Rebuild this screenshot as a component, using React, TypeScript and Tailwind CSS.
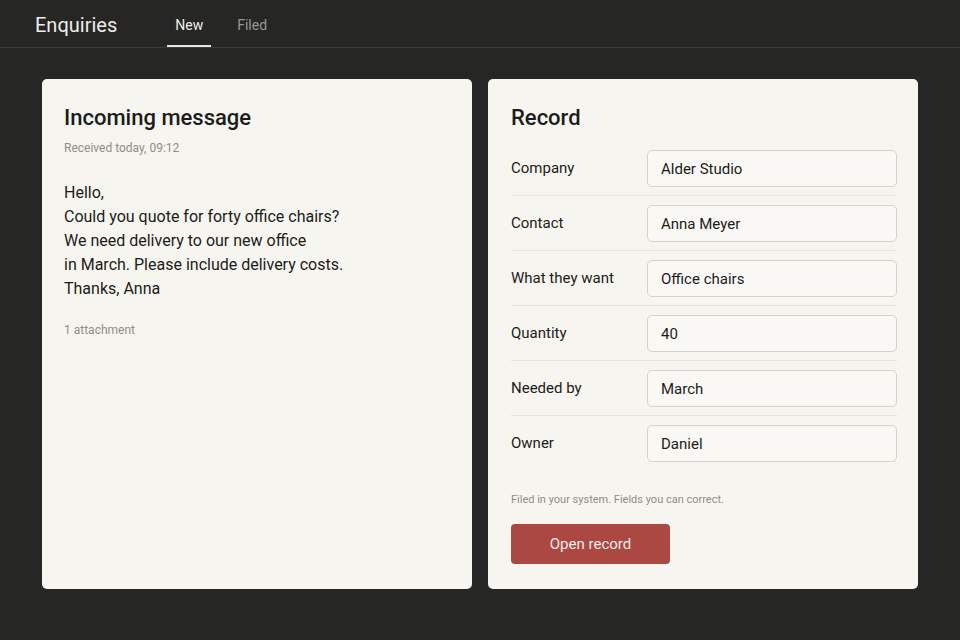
const fields = [
  { label: "Company", value: "Alder Studio" },
  { label: "Contact", value: "Anna Meyer" },
  { label: "What they want", value: "Office chairs" },
  { label: "Quantity", value: "40" },
  { label: "Needed by", value: "March" },
  { label: "Owner", value: "Daniel" },
];

export default function App() {
  return (
    <div
      className="min-h-screen w-full bg-[#262624] text-[#1c1c1a]"
      style={{ fontFamily: "Roboto, 'Noto Sans', sans-serif" }}
    >
      <header className="flex h-[48px] items-end border-b border-[#3b3b38] px-[35px]">
        <div className="flex h-full items-center pt-[3px] text-[20px] text-[#ededea]">Enquiries</div>
        <nav className="ml-[50px] flex h-full items-stretch gap-[26px] text-[14px]">
          <div className="flex items-center border-b-2 border-[#e8e6e0] px-[8px] pt-[5px] text-[#ededea]">New</div>
          <div className="flex items-center pt-[3px] text-[#9a9893]">Filed</div>
        </nav>
      </header>

      <main className="grid grid-cols-2 gap-[16px] px-[42px] pt-[31px]">
        <section className="h-[510px] rounded-[5px] bg-[#f7f5f0] px-[22px] pt-[25px]">
          <h2 className="text-[22px] leading-[28px] font-medium">Incoming message</h2>
          <p className="mt-[8px] text-[12px] leading-[16px] text-[#8f8d88]">Received today, 09:12</p>
          <div className="mt-[25px] text-[16px] leading-[24px]">
            <p>Hello,</p>
            <p>Could you quote for forty office chairs?</p>
            <p>We need delivery to our new office</p>
            <p>in March. Please include delivery costs.</p>
            <p>Thanks, Anna</p>
          </div>
          <p className="mt-[21px] text-[12px] leading-[16px] text-[#8f8d88]">1 attachment</p>
        </section>

        <section className="h-[510px] rounded-[5px] bg-[#f7f5f0] pl-[23px] pr-[21px] pt-[25px]">
          <h2 className="text-[22px] leading-[28px] font-medium">Record</h2>
          <div className="mt-[9px]">
            {fields.map((f, i) => (
              <div
                key={f.label}
                className={
                  "flex h-[55px] items-center " +
                  (i < fields.length - 1 ? "border-b border-[#e7e4dd]" : "")
                }
              >
                <div className="w-[136px] text-[15px]">{f.label}</div>
                <div className="flex h-[37px] flex-1 items-center rounded-[5px] border border-[#d5d2cb] bg-[#f9f8f4] px-[13px] pt-[2px] text-[15px]">
                  {f.value}
                </div>
              </div>
            ))}
          </div>
          <p className="mt-[21px] text-[11px] leading-[16px] text-[#8f8d88]">
            Filed in your system. Fields you can correct.
          </p>
          <button className="mt-[16px] h-[40px] w-[159px] rounded-[4px] bg-[#aa4841] text-[15px] text-[#f7ece9]">
            Open record
          </button>
        </section>
      </main>
    </div>
  );
}
